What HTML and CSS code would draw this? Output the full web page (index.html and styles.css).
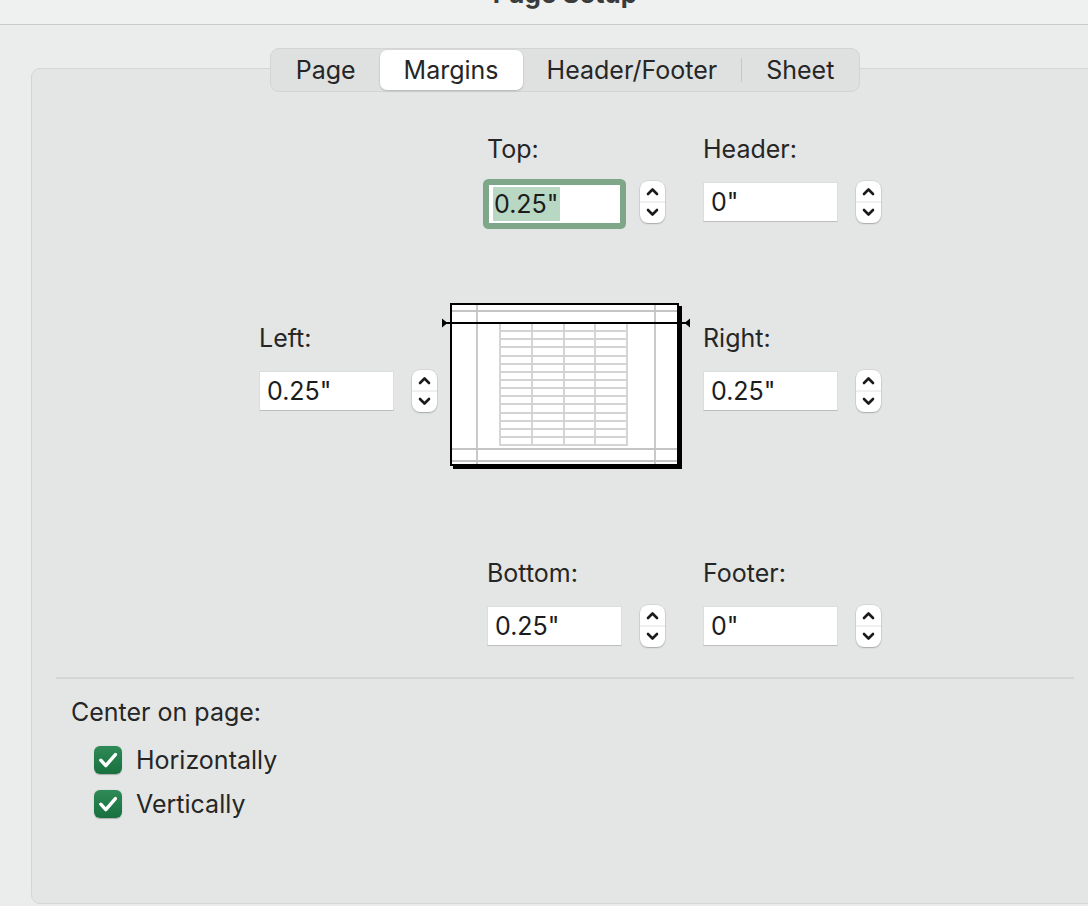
FILE: index.html
```html
<!DOCTYPE html>
<html>
<head>
<meta charset="utf-8">
<link rel="stylesheet" href="styles.css">
</head>
<body>
<div class="window">
  <div class="titlebar"><span class="title">Page Setup</span></div>
  <div class="content">
    <div class="tabs">
      <div class="tab">Page</div>
      <div class="tab active">Margins</div>
      <div class="tab">Header/Footer</div>
      <div class="tab-sep"></div>
      <div class="tab">Sheet</div>
    </div>
    <div class="panel">
      <div class="margins">
        <div class="row row-top">
          <div class="group col-b indent">
            <div class="label">Top:</div>
            <div class="control">
              <div class="field focused"><span class="sel">0.25"</span></div>
              <div class="stepper"><svg width="25" height="42" viewBox="0 0 25 42"><line x1="0" y1="21" x2="25" y2="21" class="div"/><polyline points="8,13 12.5,8.5 17,13" class="chev"/><polyline points="8,29 12.5,33.5 17,29" class="chev"/></svg></div>
            </div>
          </div>
          <div class="group col-c">
            <div class="label">Header:</div>
            <div class="control">
              <div class="field">0"</div>
              <div class="stepper"><svg width="25" height="42" viewBox="0 0 25 42"><line x1="0" y1="21" x2="25" y2="21" class="div"/><polyline points="8,13 12.5,8.5 17,13" class="chev"/><polyline points="8,29 12.5,33.5 17,29" class="chev"/></svg></div>
            </div>
          </div>
        </div>

        <div class="row row-mid">
          <div class="group col-a mid-group">
            <div class="label">Left:</div>
            <div class="control">
              <div class="field">0.25"</div>
              <div class="stepper"><svg width="25" height="42" viewBox="0 0 25 42"><line x1="0" y1="21" x2="25" y2="21" class="div"/><polyline points="8,13 12.5,8.5 17,13" class="chev"/><polyline points="8,29 12.5,33.5 17,29" class="chev"/></svg></div>
            </div>
          </div>
          <div class="col-b preview">
            <svg width="252" height="170" viewBox="0 0 252 170">
              <rect x="13" y="6" width="229" height="163" fill="#000"/>
              <rect x="11" y="4" width="227" height="161" fill="#fff" stroke="#000" stroke-width="2"/>
              <g stroke="#c4c4c4" stroke-width="1.8">
                <line x1="12" y1="11" x2="237" y2="11"/>
                <line x1="12" y1="149" x2="237" y2="149"/>
                <line x1="12" y1="161" x2="237" y2="161"/>
                <line x1="37" y1="5" x2="37" y2="164"/>
                <line x1="215" y1="5" x2="215" y2="164"/>
              </g>
              <g stroke="#d3d3d3" stroke-width="1.9" fill="none">
                <rect x="60" y="23" width="127" height="122"/>
                <line x1="92" y1="23" x2="92" y2="145"/>
                <line x1="124" y1="23" x2="124" y2="145"/>
                <line x1="155" y1="23" x2="155" y2="145"/>
                <line x1="60" y1="31" x2="187" y2="31"/>
                <line x1="60" y1="39" x2="187" y2="39"/>
                <line x1="60" y1="47" x2="187" y2="47"/>
                <line x1="60" y1="56" x2="187" y2="56"/>
                <line x1="60" y1="64" x2="187" y2="64"/>
                <line x1="60" y1="72" x2="187" y2="72"/>
                <line x1="60" y1="80" x2="187" y2="80"/>
                <line x1="60" y1="88" x2="187" y2="88"/>
                <line x1="60" y1="96" x2="187" y2="96"/>
                <line x1="60" y1="104" x2="187" y2="104"/>
                <line x1="60" y1="113" x2="187" y2="113"/>
                <line x1="60" y1="121" x2="187" y2="121"/>
                <line x1="60" y1="129" x2="187" y2="129"/>
                <line x1="60" y1="137" x2="187" y2="137"/>
              </g>
              <line x1="5" y1="23" x2="246" y2="23" stroke="#000" stroke-width="2"/>
              <polygon points="2,18.5 7.5,23 2,27.5" fill="#000"/>
              <polygon points="250,18.5 244.5,23 250,27.5" fill="#000"/>
            </svg>
          </div>
          <div class="group col-c mid-group">
            <div class="label">Right:</div>
            <div class="control">
              <div class="field">0.25"</div>
              <div class="stepper"><svg width="25" height="42" viewBox="0 0 25 42"><line x1="0" y1="21" x2="25" y2="21" class="div"/><polyline points="8,13 12.5,8.5 17,13" class="chev"/><polyline points="8,29 12.5,33.5 17,29" class="chev"/></svg></div>
            </div>
          </div>
        </div>

        <div class="row row-bottom">
          <div class="group col-b indent">
            <div class="label">Bottom:</div>
            <div class="control">
              <div class="field">0.25"</div>
              <div class="stepper"><svg width="25" height="42" viewBox="0 0 25 42"><line x1="0" y1="21" x2="25" y2="21" class="div"/><polyline points="8,13 12.5,8.5 17,13" class="chev"/><polyline points="8,29 12.5,33.5 17,29" class="chev"/></svg></div>
            </div>
          </div>
          <div class="group col-c">
            <div class="label">Footer:</div>
            <div class="control">
              <div class="field">0"</div>
              <div class="stepper"><svg width="25" height="42" viewBox="0 0 25 42"><line x1="0" y1="21" x2="25" y2="21" class="div"/><polyline points="8,13 12.5,8.5 17,13" class="chev"/><polyline points="8,29 12.5,33.5 17,29" class="chev"/></svg></div>
            </div>
          </div>
        </div>
      </div>

      <div class="divider"></div>

      <div class="center">
        <div class="label">Center on page:</div>
        <div class="check-row first">
          <span class="checkbox"><svg width="28" height="28" viewBox="0 0 28 28"><path d="M6.8 14.2 L11.8 19.6 L21.4 8.6" class="tick"/></svg></span>
          <span class="check-label">Horizontally</span>
        </div>
        <div class="check-row">
          <span class="checkbox"><svg width="28" height="28" viewBox="0 0 28 28"><path d="M6.8 14.2 L11.8 19.6 L21.4 8.6" class="tick"/></svg></span>
          <span class="check-label">Vertically</span>
        </div>
      </div>
    </div>
  </div>
</div>
</body>
</html>
```

FILE: styles.css
```css
html, body {
  margin: 0;
  padding: 0;
}
body {
  background: #eaedec;
  overflow: hidden;
  font-family: Inter, "Noto Sans", "Liberation Sans", sans-serif;
  color: #262626;
}
.window {
  width: 1130px;
  height: 906px;
}
.titlebar {
  height: 24px;
  background: #eff1f0;
  border-bottom: 1px solid #c9cbca;
  text-align: center;
  overflow: hidden;
}
.title {
  display: block;
  font-weight: 700;
  font-size: 26px;
  line-height: 26px;
  margin-top: -19px;
  color: #3b3b3b;
}
.content {
  padding: 23px 31px 0;
}
.tabs {
  display: flex;
  align-items: center;
  width: max-content;
  margin: 0 auto -24px;
  padding: 1px;
  border: 1px solid #d3d5d4;
  background: #dfe1e0;
  border-radius: 9px;
  position: relative;
  z-index: 1;
}
.tab {
  height: 40px;
  line-height: 40px;
  padding: 0 24px;
  font-size: 25px;
  border-radius: 7px;
  color: #262626;
}
.tab.active {
  background: #fff;
  box-shadow: 0 1px 2px rgba(0, 0, 0, 0.16), 0 0 0 0.5px rgba(0, 0, 0, 0.06);
}
.tab-sep {
  width: 1px;
  height: 24px;
  background: #c6c8c7;
}
.panel {
  height: 836px;
  box-sizing: border-box;
  border: 1px solid #d4d6d5;
  border-radius: 9px;
  background: #e4e6e5;
  padding: 65px 24px 0;
}
.margins {
  margin-left: 203px;
}
.row {
  display: grid;
  grid-template-columns: 181px 263px 1fr;
  align-items: start;
}
.row-mid {
  margin-top: 77px;
}
.row-bottom {
  margin-top: 88px;
}
.col-a { grid-column: 1; }
.col-b { grid-column: 2; }
.col-c { grid-column: 3; }
.indent {
  margin-left: 47px;
}
.mid-group {
  margin-top: 23px;
}
.label {
  font-size: 25px;
  line-height: 30px;
  height: 30px;
  white-space: nowrap;
}
.control {
  display: flex;
  align-items: center;
  gap: 18px;
  height: 42px;
  margin-top: 17px;
}
.field {
  width: 135px;
  height: 40px;
  box-sizing: border-box;
  background: #fff;
  border: 1px solid #dcdedd;
  border-bottom-color: #bcbebd;
  padding-left: 7px;
  font-size: 25px;
  line-height: 38px;
  color: #1c1c1c;
  white-space: nowrap;
}
.field.focused {
  height: 42px;
  align-self: flex-start;
  margin-top: 2px;
  border: 2px solid #7ea78a;
  border-radius: 2px;
  box-shadow: 0 0 0 4px #7ea78a;
  padding-left: 4px;
  line-height: 38px;
}
.sel {
  display: inline-block;
  background: #b8d8c3;
  line-height: 34px;
  padding: 0 2px 0 1px;
  vertical-align: top;
  margin-top: 2px;
}
.stepper {
  width: 25px;
  height: 42px;
  background: #fff;
  border-radius: 8px;
  box-shadow: 0 0 0 0.5px rgba(0, 0, 0, 0.12), 0 1px 1.5px rgba(0, 0, 0, 0.22);
  overflow: hidden;
}
.stepper svg {
  display: block;
}
.stepper .div {
  stroke: #e0e0e0;
  stroke-width: 1;
}
.stepper .chev {
  fill: none;
  stroke: #1a1a1a;
  stroke-width: 2.6;
  stroke-linecap: round;
  stroke-linejoin: round;
}
.preview svg {
  display: block;
}
.divider {
  height: 2px;
  background: #d4d6d5;
  margin-top: 30px;
}
.center {
  padding-left: 15px;
  margin-top: 18px;
}
.check-row {
  display: flex;
  align-items: center;
  gap: 14px;
  height: 30px;
  margin-left: 23px;
  margin-top: 14px;
}
.check-row.first {
  margin-top: 18px;
}
.checkbox {
  width: 28px;
  height: 28px;
  border-radius: 6px;
  background: linear-gradient(#2e8a56, #18703f);
  box-shadow: 0 0.5px 1px rgba(0, 0, 0, 0.25);
  flex: none;
}
.checkbox svg {
  display: block;
}
.tick {
  fill: none;
  stroke: #fff;
  stroke-width: 3.4;
  stroke-linecap: round;
  stroke-linejoin: round;
}
.check-label {
  font-size: 25px;
  line-height: 30px;
}
```
